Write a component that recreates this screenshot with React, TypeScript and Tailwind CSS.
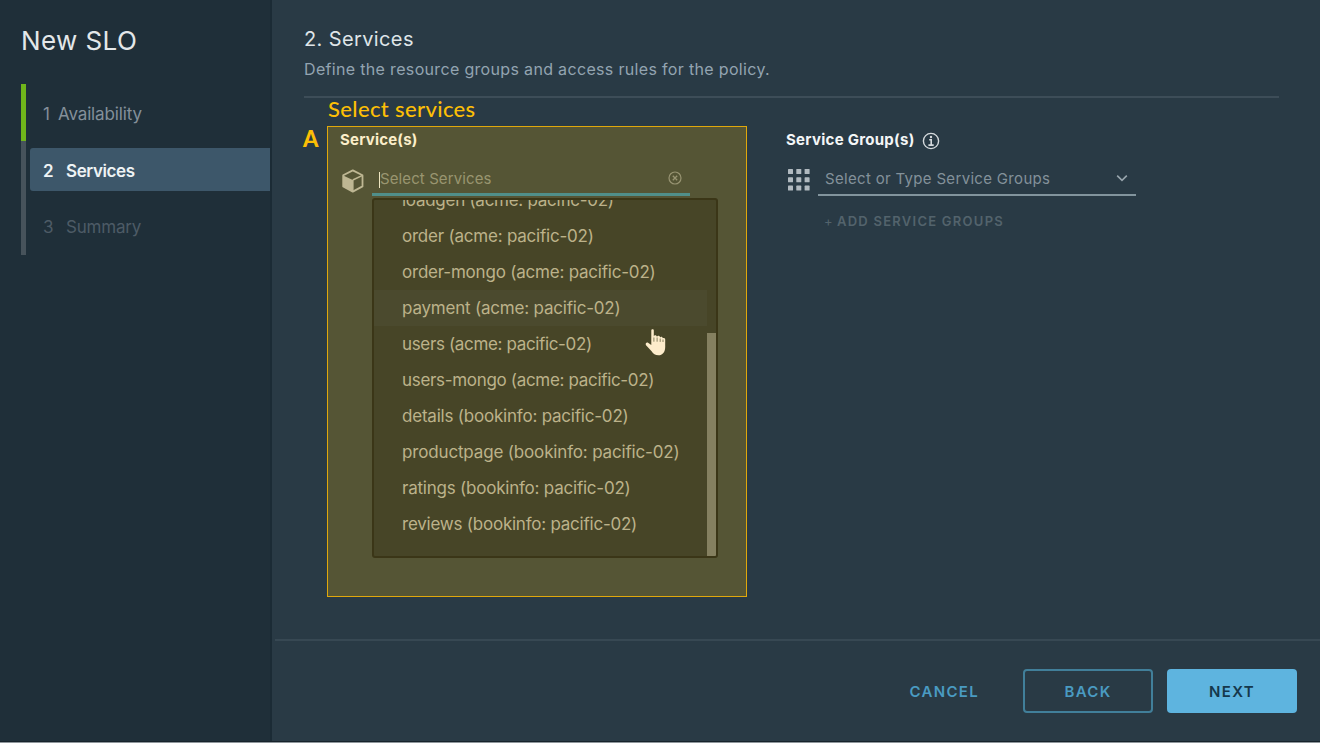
import React from "react";

const services = [
  { name: "loadgen (acme: pacific-02)", tracking: "tracking-[-0.27px]" },
  { name: "order (acme: pacific-02)", tracking: "tracking-[-0.22px]" },
  { name: "order-mongo (acme: pacific-02)", tracking: "tracking-[-0.21px]" },
  { name: "payment (acme: pacific-02)", tracking: "tracking-[-0.2px]" },
  { name: "users (acme: pacific-02)", tracking: "tracking-[-0.35px]" },
  { name: "users-mongo (acme: pacific-02)", tracking: "tracking-[-0.32px]" },
  { name: "details (bookinfo: pacific-02)", tracking: "tracking-[-0.21px]" },
  { name: "productpage (bookinfo: pacific-02)", tracking: "tracking-[-0.16px]" },
  { name: "ratings (bookinfo: pacific-02)", tracking: "tracking-[-0.22px]" },
  { name: "reviews (bookinfo: pacific-02)", tracking: "tracking-[-0.23px]" },
];

function CubeIcon() {
  return (
    <svg className="block h-6 w-[23px]" viewBox="0 0 23 24" fill="none">
      <path d="M11.8 1.4 21.5 6.2v11.2L11.8 22.6 2.2 17.4V6.2Z" stroke="#beb793" strokeWidth="1.8" strokeLinejoin="round" />
      <path d="M2.2 6.4 11.8 11v11.4L2.2 17.4Z" fill="#beb793" />
      <path d="M11.8 11 21.5 6.4M11.8 11v11" stroke="#beb793" strokeWidth="1.6" />
    </svg>
  );
}

function ClearIcon() {
  return (
    <svg className="block size-[14px]" viewBox="0 0 14 14" fill="none" stroke="#989472">
      <circle cx="7" cy="7" r="6" strokeWidth="1.2" />
      <path d="m4.8 4.8 4.4 4.4M9.2 4.8 4.8 9.2" strokeWidth="1.3" />
    </svg>
  );
}

function InfoIcon() {
  return (
    <svg className="block size-[18px]" viewBox="0 0 18 18" fill="none" stroke="#d5dadd">
      <circle cx="9" cy="9" r="7.6" strokeWidth="1.4" />
      <path d="M7.2 7.7h2v5.2M6.4 13.1h5.3" strokeWidth="1.6" />
      <circle cx="9" cy="5" r="1.2" fill="#d5dadd" stroke="none" />
    </svg>
  );
}

function GridIcon() {
  const cells = [0, 8.3, 16.6];
  return (
    <svg className="block size-[22px]" viewBox="0 0 22 22" fill="#b1bac0">
      {cells.map((y) => cells.map((x) => <rect key={`${x}-${y}`} x={x} y={y} width="5" height="5" rx="0.6" />))}
    </svg>
  );
}

function HandCursor() {
  return (
    <svg className="block h-[28px] w-[22px]" viewBox="0 0 22 28">
      <path
        d="M8.6 1.3c.8 0 1.2.5 1.2 1.3v6c.3-1.900 2.800-1.900 3.200.2.500-1.400 2.700-1.300 3.100.6.600-1.200 2.500-.8 2.800.9.600-.7 2.300-.3 2.300 1.200v7.500c0 5.200-2.800 8.300-6.700 8.300-3.300 0-5.300-1.500-6.900-4L2 17.200c-1-1.700.6-3.400 2.400-2.300l2.900 2V2.600c0-.8.500-1.300 1.300-1.300Z"
        fill="#fdeccb"
      />
      <path d="M9.9 9.500v4.200M13.100 9.500v4.200M16.200 10.500v3.400M19 11.500v2.500" stroke="#6b6745" strokeWidth="0.8" />
    </svg>
  );
}

function Sidebar() {
  return (
    <aside className="flex h-[741px] w-[272px] shrink-0 flex-col border-r-2 border-[#1b2b35] bg-[#1f2f39] pt-[25px]">
      <h1 className="pl-[21px] text-[26px] leading-8 tracking-[0.4px] text-[#e3e7e9]">New SLO</h1>
      <div className="mt-[27px] flex pl-[21px]">
        <div className="h-[171px] w-[5px] bg-[#47535b]">
          <div className="h-[57px] bg-[#70b51b]" />
        </div>
        <nav className="ml-1 flex flex-1 flex-col text-[17px]">
          <div className="flex h-[57px] items-center pt-[4px] pl-[13px] text-[#84909a]">
            <span className="w-[15px]">1</span>
            <span className="tracking-[-0.15px]">Availability</span>
          </div>
          <div className="mt-[7px] flex h-[43px] items-center rounded-l-[3px] bg-[#3d576a] pt-[4px] pl-[13px] font-semibold text-[#eef3f5]">
            <span className="w-[23px]">2</span>
            <span className="tracking-[-0.4px]">Services</span>
          </div>
          <div className="mt-[7px] flex h-[57px] items-center pt-[2px] pl-[13px] text-[#4d5b66]">
            <span className="w-[23px]">3</span>
            <span className="tracking-[-0.2px]">Summary</span>
          </div>
        </nav>
      </div>
    </aside>
  );
}

function ServicePicker() {
  return (
    <div className="relative h-[471px] w-[420px] border border-[#e0a80c] bg-[#555535]">
      <div className="pt-[3px] pl-3 text-[15px] leading-5 font-bold tracking-[0.2px] text-[#fbeec9]">Service(s)</div>
      <div className="mt-[13px] flex pl-[13px]">
        <div className="pt-[6px]">
          <CubeIcon />
        </div>
        <div className="ml-2 flex h-[33px] w-[318px] items-center border-b-[3px] border-[#508f8a] pr-2 pl-[7px]">
          <span className="mt-[3px] h-4 w-px bg-[#eee5c0]" />
          <span className="flex-1 pt-[2px] text-[15px] leading-5 tracking-[0.1px] text-[#999570]">Select Services</span>
          <ClearIcon />
        </div>
      </div>
      <div className="mt-[2px] ml-[44px] flex h-[360px] w-[346px] overflow-hidden rounded-[3px] border-2 border-[#3b3617] bg-[#474527]">
        <ul className="-mt-[18px] flex-1 text-[17px] text-[#bcb28a]">
          {services.map(({ name, tracking }, i) => (
            <li key={name} className={i === 3 ? "flex h-9 items-center bg-[#4b4a2e] pt-[2px] pl-7" : "flex h-9 items-center pt-[2px] pl-7"}>
              <span className={`whitespace-nowrap ${tracking}`}>{name}</span>
            </li>
          ))}
        </ul>
        <div className="mt-[133px] w-[9px] bg-[#858060]" />
      </div>
      <div className="absolute top-[201px] left-[316px]">
        <HandCursor />
      </div>
    </div>
  );
}

function GroupPicker() {
  return (
    <div className="ml-[39px] w-[350px] pt-[32px]">
      <div className="flex items-center text-[15px] leading-5 font-bold text-[#f3f6f7]">
        <span className="tracking-[0.28px]">Service Group(s)</span>
        <span className="mt-[2px] ml-[7px]">
          <InfoIcon />
        </span>
      </div>
      <div className="mt-[14px] flex pl-[2px]">
        <div className="pt-[5px]">
          <GridIcon />
        </div>
        <div className="ml-2 flex h-[32px] w-[318px] items-center justify-between border-b-2 border-[#82949d] pr-2 pl-[7px] text-[15px] text-[#83919a]">
          <span className="tracking-[0.32px]">Select or Type Service Groups</span>
          <svg className="size-3" viewBox="0 0 12 12" fill="none" stroke="#98a5ad" strokeWidth="1.6">
            <path d="m1.2 2.600 4.800 4.800 4.800-4.800" />
          </svg>
        </div>
      </div>
      <div className="mt-[15px] flex items-center pl-[38px] text-[13px] leading-5 font-semibold text-[#53636c]">
        <span className="w-[13px] font-normal">+</span>
        <span className="tracking-[1.25px]">ADD SERVICE GROUPS</span>
      </div>
    </div>
  );
}

export default function App() {
  return (
    <div className="h-[745px] w-[1320px] overflow-hidden bg-white font-['Inter','Liberation_Sans',sans-serif]">
      <div className="flex h-[742px] border-b border-[#17232b] bg-[#293a45]">
        <Sidebar />
        <main className="flex flex-1 flex-col">
          <header className="mr-[41px] ml-8 h-[98px] border-b-2 border-[#3d4d58] pt-[25px]">
            <h2 className="text-[20px] leading-7 tracking-[0.38px] text-[#dfe5e8]">2. Services</h2>
            <p className="mt-[4px] text-[16px] leading-6 tracking-[0.33px] text-[#93a4b1]">Define the resource groups and access rules for the policy.</p>
          </header>
          <section className="ml-[31px] flex h-[541px]">
            <div className="w-6 pt-[27px] font-['Lato',sans-serif] text-[22px] leading-7 font-black text-[#fcbf06]">A</div>
            <div>
              <div className="h-7 pl-px font-['Lato',sans-serif] text-[22px] leading-[22px] font-medium tracking-[0.36px] text-[#fcbf06]">Select services</div>
              <ServicePicker />
            </div>
            <GroupPicker />
          </section>
          <footer className="ml-[3px] flex flex-1 items-start justify-end border-t-2 border-[#374853] pt-[28px] pr-[23px] text-[15px] font-semibold tracking-[1.3px]">
            <button className="mr-[44px] h-[44px] pt-[2px] text-[#4a9bc2]">CANCEL</button>
            <button className="mr-[14px] h-[44px] w-[130px] rounded-[4px] border-2 border-[#417f9a] pt-[2px] text-[#4a9bc2]">BACK</button>
            <button className="h-[44px] w-[130px] rounded-[4px] bg-[#5eb4df] pt-[2px] text-[#15384c]">NEXT</button>
          </footer>
        </main>
      </div>
      <div className="h-px bg-[#8f979c]" />
    </div>
  );
}
